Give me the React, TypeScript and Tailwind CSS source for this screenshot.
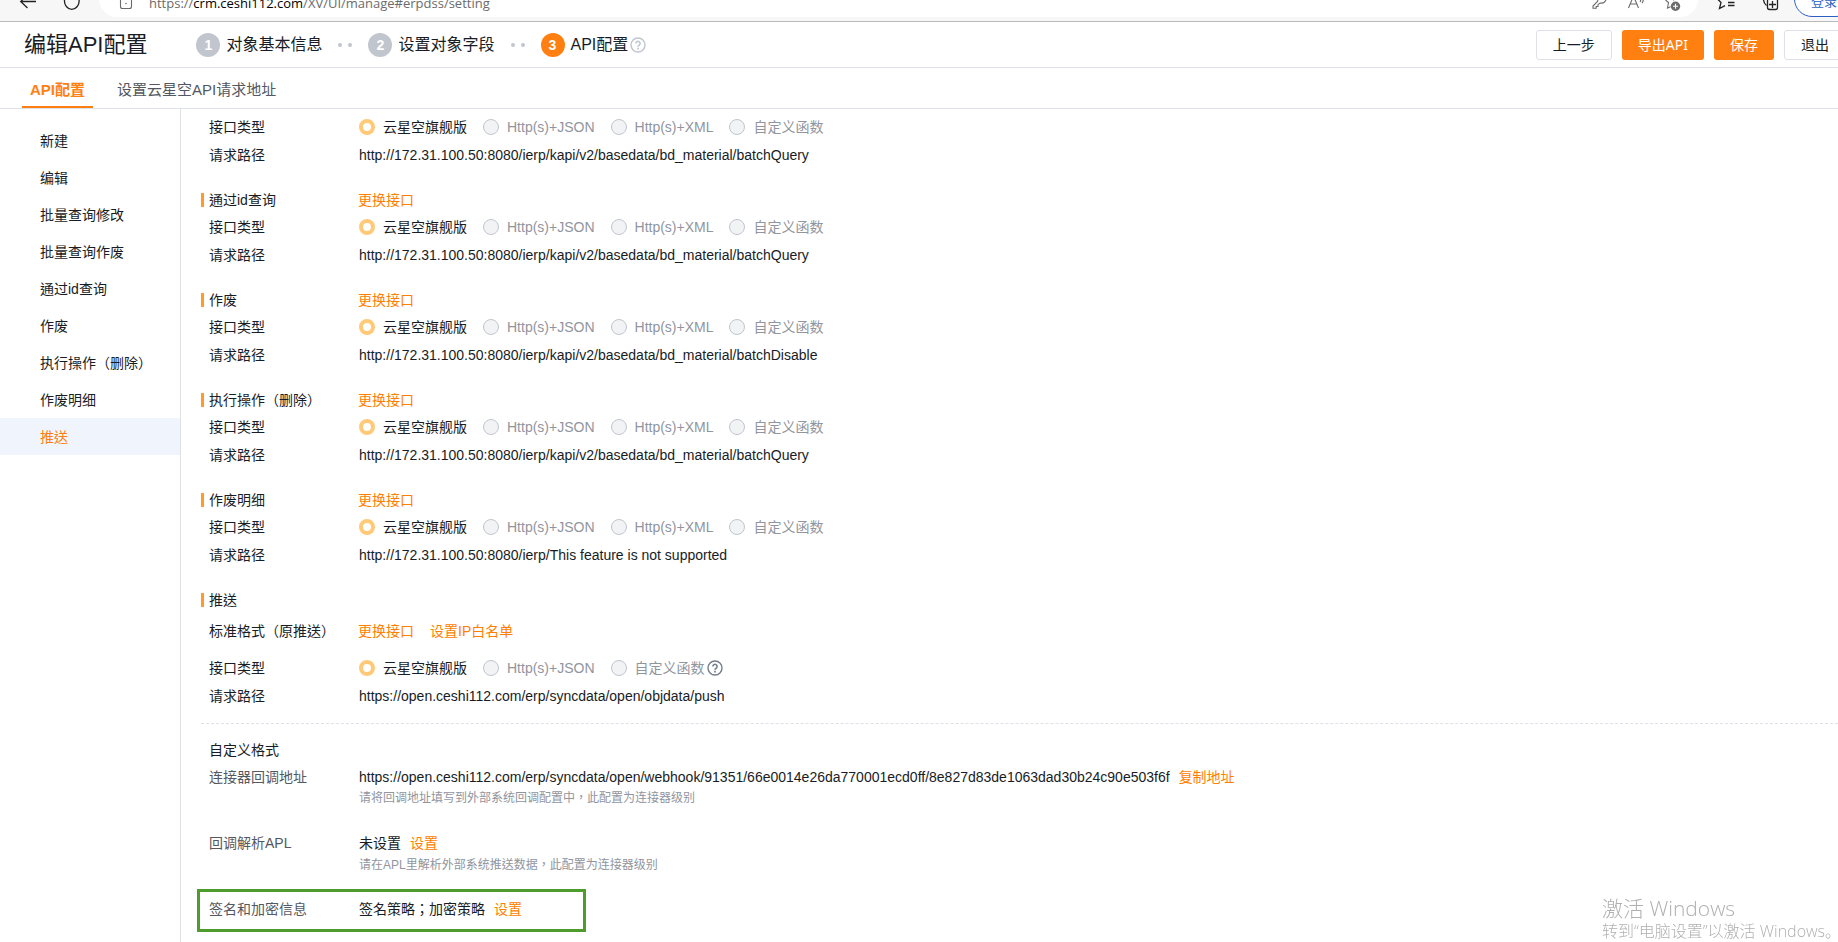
import { useState } from "react";
import clsx from "clsx";

interface ApiSection {
  title?: string;
  path: string;
}

const BASE = "http://172.31.100.50:8080/ierp/";

const menu = [
  "新建",
  "编辑",
  "批量查询修改",
  "批量查询作废",
  "通过id查询",
  "作废",
  "执行操作（删除）",
  "作废明细",
  "推送",
];

const sections: ApiSection[] = [
  { path: BASE + "kapi/v2/basedata/bd_material/batchQuery" },
  { title: "通过id查询", path: BASE + "kapi/v2/basedata/bd_material/batchQuery" },
  { title: "作废", path: BASE + "kapi/v2/basedata/bd_material/batchDisable" },
  { title: "执行操作（删除）", path: BASE + "kapi/v2/basedata/bd_material/batchQuery" },
  { title: "作废明细", path: BASE + "This feature is not supported" },
];

const allTypes = ["云星空旗舰版", "Http(s)+JSON", "Http(s)+XML", "自定义函数"];
const pushTypes = ["云星空旗舰版", "Http(s)+JSON", "自定义函数"];

const link = "text-[#ff8000]";
const rowLabel = "w-[150px] shrink-0 pl-2";
const hint = "pl-[158px] text-xs leading-4 text-[#91959e]";
// full-width punctuation sits in the middle of its cell in this family
const centeredMarks = "font-['Liberation_Sans','Noto_Sans_CJK_TC',sans-serif]";

function HelpIcon({ className }: { className?: string }) {
  return (
    <svg viewBox="0 0 16 16" fill="none" stroke="currentColor" className={className}>
      <circle cx="8" cy="8" r="7" strokeWidth="1.4" />
      <path d="M5.9 6.4a2.1 2.1 0 1 1 3.2 1.8c-.7.4-1.1.8-1.1 1.5" strokeWidth="1.6" />
      <path d="M8 10.8v1.6" strokeWidth="1.7" />
    </svg>
  );
}

function BrowserBar() {
  return (
    <div className="flex h-[22px] shrink-0 items-end overflow-hidden border-b border-[#b9b9b9] bg-[#f7f7f7] text-[#222]">
      <svg viewBox="0 0 99 21" fill="none" stroke="currentColor" strokeWidth="1.3" className="h-[21px] w-[99px] shrink-0">
        <path d="M20.5 1.500h15.500M27.500 -5l-6.800 6.500l6.800 6.500" />
        <path d="M64.500 0c-.5 5 3 9.300 7.300 9.300s7.800-4.300 7.300-9.300" />
      </svg>
      <div className="mb-1 flex h-9 flex-1 items-end rounded-full bg-white pl-5 pr-3 text-[#6b6b6b]">
        <svg viewBox="0 0 14 17" fill="none" stroke="currentColor" strokeWidth="1.1" className="h-[17px] w-[14px]">
          <path d="M1.500 -2v8.500a2 2 0 0 0 2 2h7a2 2 0 0 0 2-2v-8.500" />
          <circle cx="7" cy="3.500" r=".8" fill="currentColor" stroke="none" />
        </svg>
        <span className="ml-4 flex-1 whitespace-nowrap pb-1 font-['Open_Sans','Noto_Sans_CJK_SC',sans-serif] text-[13px] leading-5">
          https://<span className="text-black">crm.ceshi112.com</span>/XV/UI/manage#erpdss/setting
        </span>
        <svg viewBox="0 0 94 17" fill="none" stroke="currentColor" strokeWidth="1.1" className="h-[17px] w-[94px]">
          <path d="M6 -1l-.5 2.500l-4.500 4.500v2.200h3.200v-1.700h1.800v-1.800l2-1.700c3 .5 5.500-1 6.200-4" />
          <path d="M36.500 8l5-12l5 12M38.500 4h6M48 -1c.8.800.8 2 0 3M50 -2c1.400 1.500 1.400 3.500 0 5" />
          <path d="M73.500 0l3 2.500l-1 5.500l3-1.200M81.500 -1v1.500" />
          <circle cx="83.500" cy="6.200" r="4.700" fill="currentColor" stroke="none" />
          <path d="M83.500 3.700v5M81 6.200h5" stroke="white" />
        </svg>
      </div>
      <svg viewBox="0 0 96 21" fill="none" stroke="currentColor" strokeWidth="1.3" className="h-[21px] w-[96px] shrink-0">
        <path d="M19.500 -1l3.500 3.500l-1.500 6l5.500-2.800M30 2.500h6.500M30 5.500h6.500" />
        <rect x="69.500" y="-1.500" width="10" height="11" rx="2" />
        <path d="M74.500 1v7M71 4.500h7M65.500 -1c0 3 1 5 3 6.500" />
      </svg>
      <button
        type="button"
        className="-mr-4 mb-1 flex h-9 w-[60px] shrink-0 items-end justify-center rounded-full border border-[#2b5fc4] bg-white pb-1 text-[13px] leading-5 text-[#2b5fc4]"
      >
        登录
      </button>
    </div>
  );
}

function Step({ n, text, active }: { n: number; text: string; active?: boolean }) {
  return (
    <li className="flex items-center gap-[6px]">
      <span
        className={clsx(
          "flex size-6 items-center justify-center rounded-full text-sm font-bold text-white",
          active ? "bg-[#ff8010]" : "bg-[#c1c5ce]"
        )}
      >
        {n}
      </span>
      {text}
    </li>
  );
}

function StepDots() {
  return (
    <li className="flex gap-[6px]" aria-hidden="true">
      <span className="size-1 rounded-full bg-[#c1c5ce]" />
      <span className="size-1 rounded-full bg-[#c1c5ce]" />
    </li>
  );
}

function Header() {
  const plain = "h-[30px] rounded-[3px] border border-[#dee1e8] bg-white px-4";
  const primary = "h-[30px] rounded-[3px] bg-[#ff8010] px-4 text-white";
  return (
    <header className="flex h-[46px] shrink-0 items-center overflow-hidden border-b border-[#dee1e8] pl-6 text-[#181c25]">
      <h1 className="text-[22px]">编辑API配置</h1>
      <ol className="ml-[49px] flex items-center gap-4 text-base">
        <Step n={1} text="对象基本信息" />
        <StepDots />
        <Step n={2} text="设置对象字段" />
        <StepDots />
        <Step n={3} text="API配置" active />
      </ol>
      <HelpIcon className="ml-[2px] size-4 text-[#c1c5ce]" />
      <div className="-mr-2 ml-auto flex shrink-0 gap-[10px] font-['Noto_Sans','Noto_Sans_CJK_SC',sans-serif] text-sm">
        <button type="button" className={plain}>上一步</button>
        <button type="button" className={primary}>导出API</button>
        <button type="button" className={primary}>保存</button>
        <button type="button" className={plain}>退出</button>
      </div>
    </header>
  );
}

function TypeRow({ name, types, help }: { name: string; types: string[]; help?: boolean }) {
  return (
    <div role="radiogroup" aria-labelledby={name} className="flex h-7 items-center">
      <span id={name} className={rowLabel}>接口类型</span>
      <div className="flex items-center gap-4 pl-2">
        {types.map((t, i) => (
          <label key={t} className={clsx("flex items-center gap-2", i > 0 && "text-[#91959e]")}>
            <input
              type="radio"
              name={name}
              defaultChecked={i === 0}
              disabled={i > 0}
              className="size-4 appearance-none rounded-full border border-[#c1c5ce] bg-[#f2f3f5] checked:border-4 checked:border-[#ffc977] checked:bg-white"
            />
            {t}
          </label>
        ))}
      </div>
      {help && <HelpIcon className="ml-[2px] size-4 text-[#737c8c]" />}
    </div>
  );
}

function PathRow({ path }: { path: string }) {
  return (
    <div className="flex h-7 items-center">
      <span className={rowLabel}>请求路径</span>
      <span className="pl-2">{path}</span>
    </div>
  );
}

function SectionTitle({ title, action }: { title: string; action?: boolean }) {
  return (
    <div className="flex h-[26px] items-center">
      <h2 className={clsx("flex w-[157px] shrink-0 items-center gap-[5px]", centeredMarks)}>
        <span className="h-[14px] w-[3px] bg-[#ff9b29]" />
        {title}
      </h2>
      {action && <a href="#change" className={link}>更换接口</a>}
    </div>
  );
}

export default function App() {
  const [current, setCurrent] = useState("推送");

  return (
    <div className="flex h-screen flex-col overflow-hidden bg-white font-['Liberation_Sans','Noto_Sans_CJK_SC',sans-serif] text-sm text-[#181c25]">
      <BrowserBar />
      <Header />
      <nav className="flex h-[41px] shrink-0 gap-6 border-b border-[#dee1e8] pl-[22px] text-[15px]">
        <a href="#api" className="flex items-center border-b-2 border-[#ff8010] px-2 pt-[6px] font-bold text-[#ff8010]">
          API配置
        </a>
        <a href="#address" className="flex items-center pt-1 text-[#545861]">设置云星空API请求地址</a>
      </nav>

      <div className="flex min-h-0 flex-1">
        <aside className="w-[181px] shrink-0 border-r border-[#dee1e8] pt-[13px]">
          {menu.map((item) => (
            <button
              key={item}
              type="button"
              onClick={() => setCurrent(item)}
              className={clsx(
                "block h-[37px] w-full pl-10 text-left",
                centeredMarks,
                item === current && "bg-[#f0f4fc] text-[#ff8010]"
              )}
            >
              {item}
            </button>
          ))}
        </aside>

        <main className="min-w-0 flex-1 overflow-hidden pl-5 pt-1">
          {sections.map((s, i) => (
            <section key={i} className="mb-[18px]">
              {s.title && <SectionTitle title={s.title} action />}
              <TypeRow name={"type" + i} types={allTypes} />
              <PathRow path={s.path} />
            </section>
          ))}

          {/* Push */}
          <section>
            <SectionTitle title="推送" />
            <div className="flex h-9 items-center">
              <span className={clsx("w-[157px] shrink-0 pl-2", centeredMarks)}>标准格式（原推送）</span>
              <a href="#change" className={link}>更换接口</a>
              <a href="#whitelist" className={clsx(link, "ml-4")}>设置IP白名单</a>
            </div>
            <div className="pt-[5px]">
              <TypeRow name="pushType" types={pushTypes} help />
              <PathRow path="https://open.ceshi112.com/erp/syncdata/open/objdata/push" />
            </div>
          </section>

          {/* Custom format */}
          <section className="mt-[13px] border-t border-dashed border-[#dee1e8] pt-3">
            <h3 className="flex h-7 items-center pl-2">自定义格式</h3>
            <div className="flex h-[26px] items-center">
              <span className={clsx(rowLabel, "text-[#545861]")}>连接器回调地址</span>
              <span className="pl-2">
                https://open.ceshi112.com/erp/syncdata/open/webhook/91351/66e0014e26da770001ecd0ff/8e827d83de1063dad30b24c90e503f6f
              </span>
              <a href="#copy" className={clsx(link, "ml-[9px]")}>复制地址</a>
            </div>
            <p className={clsx(hint, centeredMarks)}>
              请将回调地址填写到外部系统回调配置中，此配置为连接器级别
            </p>
            <div className="mt-[23px] flex h-7 items-center">
              <span className={clsx(rowLabel, "text-[#545861]")}>回调解析APL</span>
              <span className="pl-2">未设置</span>
              <a href="#apl" className={clsx(link, "ml-[9px]")}>设置</a>
            </div>
            <p className={clsx(hint, centeredMarks)}>
              请在APL里解析外部系统推送数据，此配置为连接器级别
            </p>
            <div className="-ml-1 mt-4 flex h-[43px] w-[389px] items-center border-3 border-[#4f9c2e] pb-1 pl-[1px]">
              <span className={clsx(rowLabel, "text-[#545861]")}>签名和加密信息</span>
              <span className={clsx("pl-2", centeredMarks)}>签名策略；加密策略</span>
              <a href="#sign" className={clsx(link, "ml-[9px]")}>设置</a>
            </div>
          </section>
        </main>
      </div>

      {/* System watermark */}
      <div className="pointer-events-none fixed bottom-0 right-0 w-[236px] whitespace-nowrap font-['Open_Sans','Noto_Sans_CJK_SC',sans-serif] font-light text-[#b0b0b0]">
        <p className="text-[21px] leading-6">激活 Windows</p>
        <p className="text-base leading-[22px]">转到“电脑设置”以激活 Windows。</p>
      </div>
    </div>
  );
}
